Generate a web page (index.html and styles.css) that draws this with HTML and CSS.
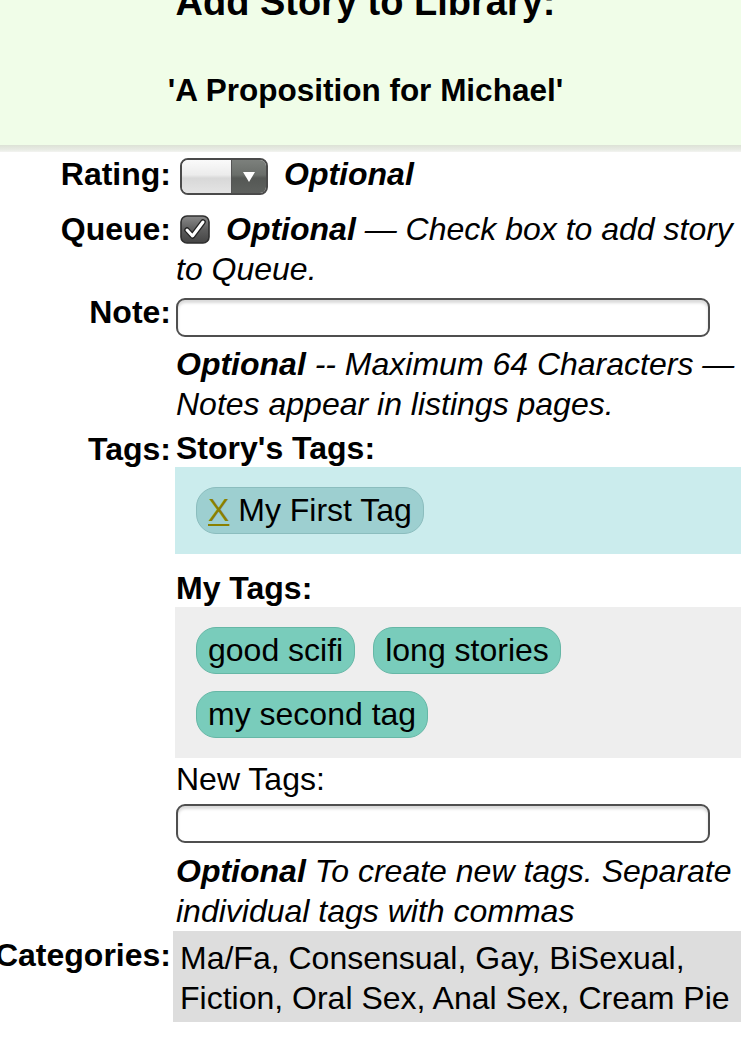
FILE: index.html
```html
<!DOCTYPE html>
<html>
<head>
<meta charset="utf-8">
<link rel="stylesheet" href="styles.css">
</head>
<body>
<header class="head">
  <h1 class="title">Add Story to Library:</h1>
  <h2 class="story">'A Proposition for Michael'</h2>
</header>
<div class="shade"></div>
<form class="form">
  <div class="row row-rating">
    <div class="label">Rating:</div>
    <div class="value value-flex">
      <span class="select"><span class="select-face"></span><span class="select-btn"><svg width="14" height="12" viewBox="0 0 14 12"><path d="M1 1 L13 1 L7 11 Z" fill="#fff"/></svg></span></span>
      <em class="opt">Optional</em>
    </div>
  </div>
  <div class="row row-queue">
    <div class="label">Queue:</div>
    <div class="value help"><span class="check"><svg width="30" height="29" viewBox="0 0 30 29"><defs><linearGradient id="cg" x1="0" y1="0" x2="0" y2="1"><stop offset="0" stop-color="#8a8a8a"/><stop offset="0.5" stop-color="#5e5e5e"/><stop offset="1" stop-color="#444"/></linearGradient></defs><rect x="1" y="1" width="28" height="27" rx="6" fill="url(#cg)" stroke="#2e2e2e" stroke-width="1.6"/><path d="M7 15 L12.5 21 L23 7" fill="none" stroke="#222" stroke-width="5.5" stroke-linecap="round" stroke-linejoin="round"/><path d="M7 15 L12.5 21 L23 7" fill="none" stroke="#fff" stroke-width="3" stroke-linecap="round" stroke-linejoin="round"/></svg></span><b class="opt">Optional</b> — Check box to add story to Queue.</div>
  </div>
  <div class="row row-note">
    <div class="label">Note:</div>
    <div class="value">
      <div class="input"></div>
      <div class="help after-input"><b class="opt">Optional</b> -- Maximum 64 Characters — Notes appear in listings pages.</div>
    </div>
  </div>
  <div class="row row-tags">
    <div class="label">Tags:</div>
    <div class="value">
      <div class="subhead">Story's Tags:</div>
      <div class="tagbox tagbox-story">
        <span class="pill pill-story"><a class="remove">X</a> My First Tag</span>
      </div>
      <div class="subhead subhead-gap">My Tags:</div>
      <div class="tagbox tagbox-mine">
        <span class="pill pill-mine">good scifi</span>
        <span class="pill pill-mine">long stories</span>
        <span class="pill pill-mine">my second tag</span>
      </div>
      <div class="newtags">New Tags:</div>
      <div class="input input-new"></div>
      <div class="help after-input2"><b class="opt">Optional</b> To create new tags. Separate individual tags with commas</div>
    </div>
  </div>
  <div class="row row-cat">
    <div class="label label-cat">Categories:</div>
    <div class="value cats">Ma/Fa, Consensual, Gay, BiSexual, Fiction, Oral Sex, Anal Sex, Cream Pie</div>
  </div>
</form>
</body>
</html>
```
FILE: styles.css
```css
html, body {
  margin: 0;
  padding: 0;
  background: #fff;
  overflow: hidden;
}
body {
  width: 741px;
  height: 1040px;
  font-family: "Liberation Sans", Arial, Helvetica, sans-serif;
  font-size: 32px;
  line-height: 40px;
  color: #000;
}
.head {
  background: #f0fde8;
  text-align: center;
  padding: 0 10px 35px 0;
}
.title {
  margin: -20px 0 0 0;
  font-size: 38px;
  line-height: 44px;
  font-weight: bold;
}
.story {
  margin: 46px 0 0 0;
  font-size: 31.5px;
  line-height: 40px;
  font-weight: bold;
}
.shade {
  height: 7px;
  background: linear-gradient(#dde2d6, #e9ece5 70%, #f3f4f1);
}
.form {
  display: block;
  padding-top: 2px;
}
.row {
  display: flex;
  align-items: flex-start;
}
.label {
  flex: 0 0 171px;
  width: 171px;
  display: flex;
  justify-content: flex-end;
  font-weight: bold;
  white-space: nowrap;
}
.value {
  flex: 1 1 auto;
  margin-left: 5px;
  min-width: 0;
}
.help {
  font-style: italic;
}
.opt {
  font-weight: bold;
  font-style: italic;
}
.row-rating {
  height: 55px;
}
.value-flex {
  display: flex;
  align-items: flex-start;
}
.select {
  display: flex;
  margin: 4px 0 0 4px;
  width: 88px;
  height: 37px;
  box-sizing: border-box;
  border: 2px solid #4a4a4a;
  border-radius: 8px;
  overflow: hidden;
}
.select-face {
  flex: 1;
  background: linear-gradient(#fafafa, #ececec 45%, #d8d8d8 55%, #e4e4e4);
  border-right: 1px solid #555;
}
.select-btn {
  width: 34px;
  display: flex;
  align-items: center;
  justify-content: center;
  background: linear-gradient(#7c807c, #6a6e6a 45%, #555855 55%, #5e615e);
}
.value-flex .opt {
  margin-left: 16px;
}
.check {
  display: inline-block;
  vertical-align: top;
  width: 30px;
  height: 29px;
  margin: 6px 16px 0 4px;
}
.check svg {
  display: block;
}
.row-note .label {
  padding-top: 3px;
}
.input {
  margin-top: 9px;
  width: 534px;
  height: 39px;
  box-sizing: border-box;
  border: 2px solid #4f4f4f;
  border-radius: 9px;
  background: #fff;
  box-shadow: inset 0 3px 3px rgba(0,0,0,0.15);
}
.after-input {
  margin-top: 7px;
}
.row-tags {
  margin-top: 5px;
}
.subhead {
  font-weight: bold;
  line-height: 38px;
}
.subhead-gap {
  margin-top: 15px;
}
.tagbox {
  display: flex;
  flex-wrap: wrap;
  gap: 17px 18px;
  padding: 20px 22px 20px 21px;
  align-items: flex-start;
}
.tagbox-story {
  background: #cbeced;
  margin-left: -1px;
}
.tagbox-mine {
  background: #eeeeee;
  margin-left: -1px;
}
.pill {
  display: inline-block;
  height: 47px;
  box-sizing: border-box;
  line-height: 44px;
  padding: 0 11px;
  border: 1.5px solid;
  border-radius: 20px;
  white-space: nowrap;
}
.pill-story {
  background: #9dcfd0;
  border-color: #8bbdbe;
}
.pill-mine {
  background: #79ccbb;
  border-color: #66b7a6;
}
.remove {
  color: #8a8000;
  text-decoration: underline;
  text-decoration-thickness: 2px;
  text-underline-offset: 3px;
}
.newtags {
  line-height: 40px;
  margin-top: 1px;
}
.input-new {
  margin-top: 5px;
}
.after-input2 {
  margin-top: 8px;
}
.label-cat {
  padding-top: 4px;
}
.cats {
  margin-left: 2px;
  background: #dddddd;
  padding: 7px 7px 4px 7px;
}
```
